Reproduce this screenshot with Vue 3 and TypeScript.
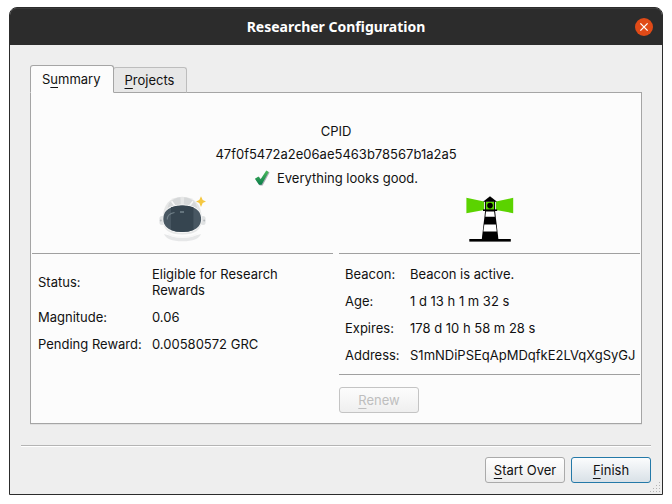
<script setup lang="ts">
import { ref } from 'vue'

interface Field {
  label: string
  value: string
}

type TabId = 'summary' | 'projects'

const activeTab = ref<TabId>('summary')

const cpid = '47f0f5472a2e06ae5463b78567b1a2a5'

const accountFields: Field[] = [
  { label: 'Status:', value: 'Eligible for Research Rewards' },
  { label: 'Magnitude:', value: '0.06' },
  { label: 'Pending Reward:', value: '0.00580572 GRC' },
]

const beaconFields: Field[] = [
  { label: 'Beacon:', value: 'Beacon is active.' },
  { label: 'Age:', value: '1 d 13 h 1 m 32 s' },
  { label: 'Expires:', value: '178 d 10 h 58 m 28 s' },
  { label: 'Address:', value: 'S1mNDiPSEqApMDqfkE2LVqXgSyGJ' },
]
</script>

<template>
  <div class="window" role="dialog" aria-labelledby="window-title">
    <header class="titlebar">
      <h1 id="window-title">Researcher Configuration</h1>
      <button class="close" type="button" aria-label="Close">
        <svg viewBox="0 0 18 18" width="18" height="18" aria-hidden="true">
          <path d="M5.4 5.4 12.6 12.6M12.6 5.4 5.4 12.6" stroke="#fff" stroke-width="1.3" />
        </svg>
      </button>
    </header>

    <main class="content">
      <div class="tabs" role="tablist">
        <button
          class="tab" :class="{ active: activeTab === 'summary' }" type="button" role="tab"
          :aria-selected="activeTab === 'summary'" @click="activeTab = 'summary'"
        >S<u>u</u>mmary</button>
        <button
          class="tab" :class="{ active: activeTab === 'projects' }" type="button" role="tab"
          :aria-selected="activeTab === 'projects'" @click="activeTab = 'projects'"
        ><u>P</u>rojects</button>
      </div>

      <div class="panel" role="tabpanel">
        <div class="overview">
          <p>CPID</p>
          <p>{{ cpid }}</p>
          <p class="state">
            <svg viewBox="0 0 16 16" width="16" height="16" aria-hidden="true">
              <defs>
                <linearGradient id="check-fill" x1="0" y1="0" x2="0" y2="1">
                  <stop offset="0" stop-color="#4cbb5c" />
                  <stop offset="1" stop-color="#0b7d4b" />
                </linearGradient>
              </defs>
              <path d="M1 9.2 4.6 6.8 6.7 9.4 12.6 .9 15 2.2 8 15.2 5.2 15.2Z" fill="#777786" opacity=".6" transform="translate(.6 .3)" />
              <path d="M.9 8.8 4.5 6.4 6.6 9.2 12.3 .6 14.7 1.9 7.6 14.8 5 14.8Z" fill="url(#check-fill)" />
            </svg>
            <span>Everything looks good.</span>
          </p>
        </div>

        <div class="columns">
          <section class="column">
            <svg class="picture" viewBox="9 8 48 48" width="48" height="48" aria-hidden="true">
              <path d="M14 46Q32 53 51 46Q48 53.3 32.5 53.3Q17 53.3 14 46Z" fill="#e6e7e8" />
              <path d="M17 45Q32 52 48 45Q45 50 32.5 50Q20 50 17 45Z" fill="#f7f7f7" />
              <rect x="9.4" y="28" width="5" height="9" rx="2.5" fill="#e1e3e4" />
              <rect x="50.6" y="28" width="5" height="9" rx="2.5" fill="#e1e3e4" />
              <circle cx="10.8" cy="32.5" r="1" fill="#b6babd" />
              <circle cx="54.2" cy="32.5" r="1" fill="#b6babd" />
              <path d="M12.7 31C12.7 17 20 8.8 32.2 8.8S51.8 17 51.8 31C51.8 42 45 46.5 32.2 46.5S12.7 42 12.7 31Z" fill="#e6e7e7" />
              <path d="M19 15.3Q24 9.6 30.4 9.3L30.8 16.3Q24 16.5 17.4 20Z" fill="#d6d8d9" />
              <path d="M34.2 9.3Q40.6 9.6 45.6 15.3L47.2 20Q40.6 16.5 33.8 16.3Z" fill="#d6d8d9" />
              <path d="M21.6 13.2 24.6 17.2M43 13.2 40 17.2" stroke="#f8f8f8" stroke-width="1.6" />
              <path d="M12.8 31C12.8 19.5 23.5 16.7 32.2 16.7S51.6 19.5 51.6 31C51.6 42 41 44.8 32.2 44.8S12.8 42 12.8 31Z" fill="#fbfbfb" />
              <path d="M13.3 31C13.3 20 24 17.4 32.2 17.4S51.1 20 51.1 31C51.1 41.2 41 44 32.2 44S13.3 41.2 13.3 31Z" fill="#485762" />
              <path d="M21 19.3Q26 17.4 32.2 17.4Q39 17.4 43.4 19.3V42.1Q39 44 32.2 44Q25.5 44 21 42.1Z" fill="#364550" />
              <path d="M17.3 31.5Q17 26 24.5 24.5" stroke="#718089" stroke-width="1.2" fill="none" />
              <path d="M30 24H34" stroke="#718089" stroke-width="1.6" />
              <path d="M51 8.2 52.7 12.1 56 13.6 52.7 15.1 51 19 49.3 15.1 46 13.6 49.3 12.1Z" fill="#f5c842" />
            </svg>
            <dl class="fields account">
              <template v-for="field in accountFields" :key="field.label">
                <dt>{{ field.label }}</dt>
                <dd>{{ field.value }}</dd>
              </template>
            </dl>
          </section>

          <section class="column">
            <svg class="picture" viewBox="9 8 48 48" width="48" height="48" aria-hidden="true">
              <path d="M9.4 9.8 27 13.6V22L9.4 25.2ZM56.2 9.8 39 13.6V22L56.2 25.2Z" fill="#5bd300" />
              <rect x="28" y="13.5" width="10" height="9" fill="#5bd300" />
              <path d="M33 8.2 40 13.7H26Z" />
              <path d="M28.4 13V22.5M37.6 13V22.5" stroke="#000" stroke-width="1" />
              <circle cx="33" cy="17.6" r="2.8" />
              <rect x="26" y="21.4" width="14.2" height="1.6" />
              <path d="M28.2 22.6H38L41.4 51H24.8Z" />
              <path d="M29 23.4H37.1L37.8 28.8H28.4Z" fill="#fff" />
              <path d="M27.3 36.5H38.8L39.7 43.6H26.4Z" fill="#fff" />
              <rect x="12.3" y="51" width="41.5" height="2.6" />
            </svg>
            <dl class="fields beacon">
              <template v-for="field in beaconFields" :key="field.label">
                <dt>{{ field.label }}</dt>
                <dd>{{ field.value }}</dd>
              </template>
            </dl>
            <div class="actions">
              <button class="button" type="button" disabled><u>R</u>enew</button>
            </div>
          </section>
        </div>
      </div>
    </main>

    <footer class="footer">
      <button class="button" type="button"><u>S</u>tart Over</button>
      <button class="button primary" type="button"><u>F</u>inish</button>
    </footer>
    <svg class="grip" viewBox="0 0 12 12" width="12" height="12" aria-hidden="true">
      <path
        d="M10 1h1M7 4h1M10 4h1M4 7h1M7 7h1M10 7h1M1 10h1M4 10h1M7 10h1M10 10h1"
        stroke="#b4b4b4" stroke-width="1" transform="translate(0 .5)"
      />
    </svg>
  </div>
</template>

<style>
body {
  background: #fff;
}
</style>

<style scoped>
.window {
  position: relative;
  margin: 7px 9px;
  border: 1px solid #2c2c2c;
  border-radius: 8px 8px 0 0;
  background: #eee;
  color: #111;
  font: 13px/16px Inter, sans-serif;
}

.titlebar {
  display: grid;
  grid-template-columns: 1fr auto 1fr;
  align-items: center;
  height: 37px;
  padding: 0 9px;
  border-radius: 7px 7px 0 0;
  background: #2c2c2c;
  box-shadow: inset 0 1px #3a3a3a;
}

h1 {
  grid-column: 2;
  margin: 0;
  color: #fff;
  font: bold 14px/20px "Noto Sans", sans-serif;
}

.close {
  display: block;
  justify-self: end;
  width: 18px;
  height: 18px;
  padding: 0;
  border: 0;
  border-radius: 50%;
  background: #e04a17;
}

.close svg {
  display: block;
}

.content {
  padding: 20px 20px 0;
}

u {
  text-decoration-thickness: 1px;
  text-underline-offset: 3px;
  text-decoration-skip-ink: none;
}

.tabs {
  display: flex;
  align-items: flex-end;
}

.tab {
  height: 26px;
  margin: 0 0 -1px -1px;
  padding: 0 12px 0 11px;
  border: 1px solid #bdbdbd;
  border-bottom-color: #a5a5a5;
  border-radius: 3px 3px 0 0;
  background: #e7e7e7;
  color: inherit;
  font: inherit;
}

.tab.active {
  z-index: 1;
  height: 28px;
  margin-left: 0;
  border-color: #a5a5a5;
  border-bottom-color: #fcfcfc;
  background: #fcfcfc;
}

.panel {
  padding: 30px 1px 10px;
  border: 1px solid #a5a5a5;
  background: #fcfcfc;
  box-shadow: 0 1px #e0e0e0;
}

.overview {
  display: grid;
  gap: 7px;
  text-align: center;
}

.overview p {
  margin: 0;
}

.overview .state {
  display: flex;
  justify-content: center;
  align-items: center;
  gap: 7px;
  line-height: 18px;
}

.columns {
  display: grid;
  grid-template-columns: repeat(2, minmax(0, 1fr));
  gap: 6px;
  margin-top: 9px;
}

.picture {
  display: block;
  margin: 0 auto 9px;
}

.fields {
  display: grid;
  gap: 11px;
  align-items: center;
  margin: 0;
  padding: 12px 4px 11px 6px;
  border-top: 1px solid #a0a0a0;
}

.account {
  grid-template-columns: 103px 1fr;
  padding-right: 40px;
}

.beacon {
  grid-template-columns: 54px 1fr;
  border-bottom: 1px solid #a0a0a0;
}

dt {
  white-space: nowrap;
}

dd {
  margin: 0;
}

.actions {
  margin-top: 12px;
}

.button {
  min-width: 80px;
  height: 26px;
  padding: 0 7px;
  border: 1px solid #aaa;
  border-radius: 3px;
  background: linear-gradient(#fff, #ececec);
  color: #111;
  font: inherit;
}

.button:disabled {
  border-color: #c4c4c4;
  background: linear-gradient(#fcfcfc, #efefef);
  color: #bebebe;
}

.primary {
  border-color: #2479a8;
  background: linear-gradient(#fbfcfd, #d9e1e7);
}

.footer {
  display: flex;
  justify-content: flex-end;
  gap: 6px;
  margin: 21px 11px 0;
  padding: 11px 0;
  border-top: 1px solid #b4b4b4;
  box-shadow: inset 0 1px #fff;
}

.grip {
  position: absolute;
  right: 1px;
  bottom: 1px;
}
</style>
